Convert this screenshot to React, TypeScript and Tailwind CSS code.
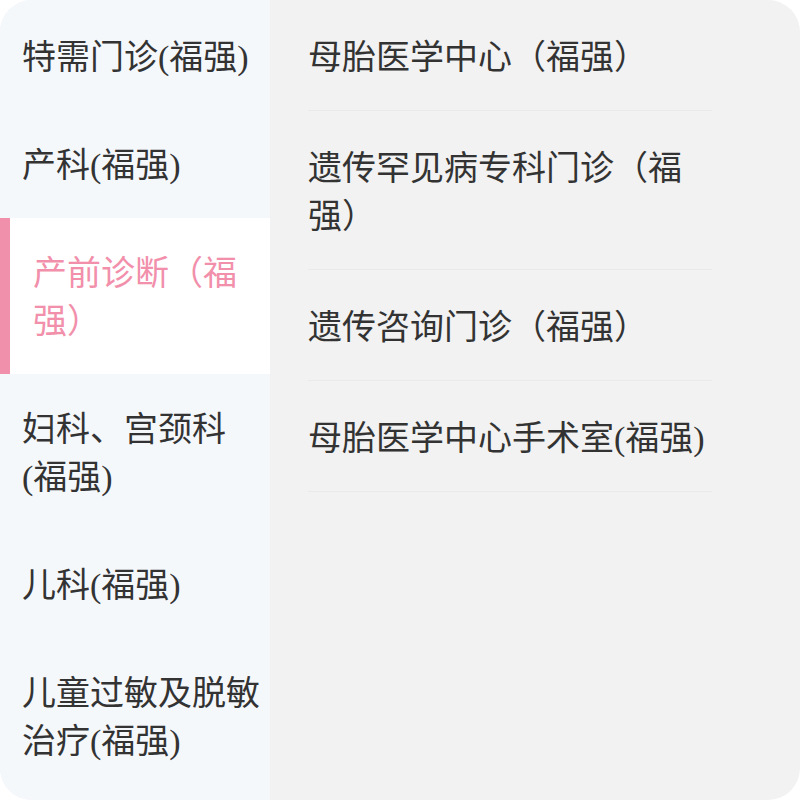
import React from "react";

const left = [
  "特需门诊(福强)",
  "产科(福强)",
  "产前诊断（福强）",
  "妇科、宫颈科(福强)",
  "儿科(福强)",
  "儿童过敏及脱敏治疗(福强)",
];

const right = [
  "母胎医学中心（福强）",
  "遗传罕见病专科门诊（福强）",
  "遗传咨询门诊（福强）",
  "母胎医学中心手术室(福强)",
];

export default function App() {
  return (
    <div
      className="w-[800px] h-[800px] bg-white"
      style={{ fontFamily: '"Liberation Serif", "Noto Sans CJK SC", serif' }}
    >
      <div className="flex w-full h-full rounded-[32px] overflow-hidden bg-[#f2f2f2]">
        <div className="w-[270px] shrink-0 bg-[#f5f8fb] pt-[2px] flex flex-col">
          {left.map((t, i) =>
            i === 2 ? (
              <div key={i} className="flex bg-white">
                <div className="w-[10px] shrink-0 bg-[#f090ab]" />
                <div className="pl-[23px] pr-[6px] pt-[32px] pb-[28px] text-[34px] leading-[48px] text-[#f28fab]">
                  {t}
                </div>
              </div>
            ) : (
              <div
                key={i}
                className="pl-[22px] pr-[6px] pt-[32px] pb-[28px] text-[34px] leading-[48px] text-[#333333]"
              >
                {t}
              </div>
            )
          )}
        </div>
        <div className="flex-1 flex flex-col pl-[38px] pr-[88px]">
          {right.map((t, i) => (
            <div
              key={i}
              className="pt-[34px] pb-[28px] text-[34px] leading-[48px] text-[#333333] border-b border-[#eaeaea]"
            >
              {t}
            </div>
          ))}
        </div>
      </div>
    </div>
  );
}
